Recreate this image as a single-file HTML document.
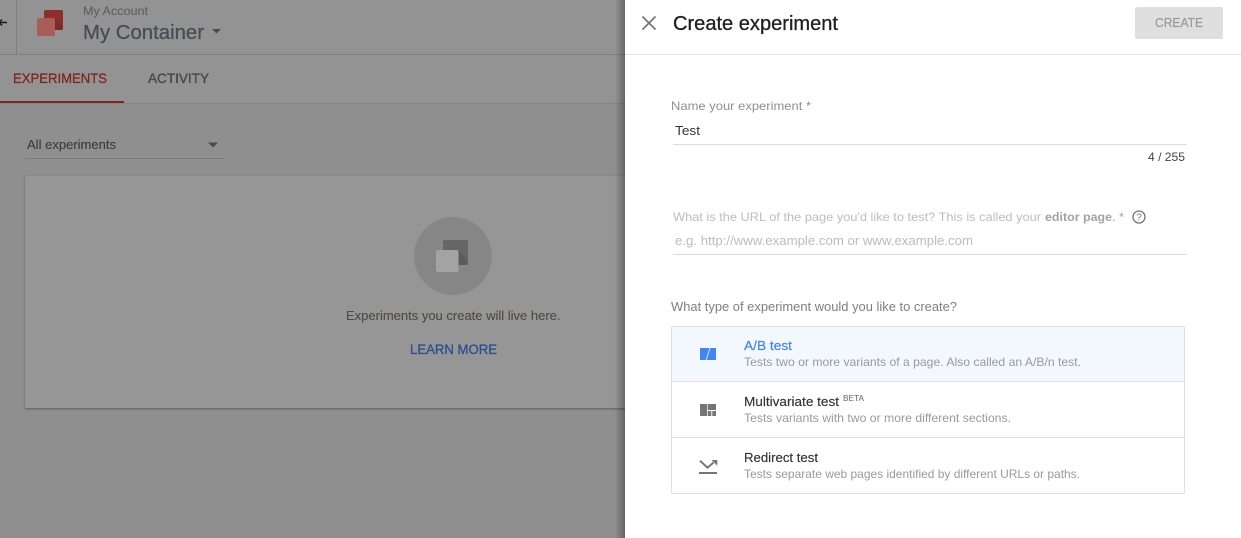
<!DOCTYPE html>
<html><head><meta charset="utf-8"><title>Create experiment</title>
<style>
html,body{margin:0;padding:0;width:1241px;height:538px;overflow:hidden;background:#8f8f8f}
svg{display:block;position:absolute;left:0;top:0}
text{font-family:"Liberation Sans",sans-serif;white-space:pre}
</style></head><body>
<svg width="1241" height="538" viewBox="0 0 1241 538" xmlns="http://www.w3.org/2000/svg">
<defs>
<linearGradient id="ps" x1="0" x2="1" y1="0" y2="0"><stop offset="0" stop-color="#000" stop-opacity="0"/><stop offset="1" stop-color="#000" stop-opacity=".3"/></linearGradient>
<filter id="cs" x="-5%" y="-5%" width="110%" height="110%"><feDropShadow dx="0" dy="1" stdDeviation="1.2" flood-color="#000" flood-opacity=".35"/></filter>
</defs>
<rect width="625" height="538" fill="#8f8f8f"/>
<rect width="625" height="54" fill="#939393"/>
<rect y="55" width="625" height="48" fill="#939393"/>
<rect y="54" width="625" height="1" fill="#7f7f7f"/>
<rect y="103" width="625" height="1" fill="#858585"/>
<rect x="16" y="0" width="1" height="54" fill="#7f7f7f"/>
<path d="M0 22.5H7M2 19.5L-1 22.500L2 25.500" fill="none" stroke="#181820" stroke-width="1.500"/>
<rect x="44" y="10" width="19" height="20" rx="2" fill="#8c2f2a"/>
<path d="M55 18L63 26V28Q63 30 61 30H55Z" fill="#7b2a26"/>
<rect x="37" y="18" width="18" height="18" rx="2" fill="#a85d5a"/>
<text x="83" y="15" font-size="12" fill="#5f5f5f" stroke="#5f5f5f" stroke-width=".1" textLength="65" lengthAdjust="spacingAndGlyphs">My Account</text>
<text x="83" y="39" font-size="20" fill="#474c55" stroke="#474c55" stroke-width=".3" textLength="121" lengthAdjust="spacingAndGlyphs">My Container</text>
<path d="M212 29H221L216.500 33.500Z" fill="#4a4a4a"/>
<text x="13" y="83" font-size="14" fill="#7e261d" stroke="#7e261d" stroke-width=".3" textLength="94" lengthAdjust="spacingAndGlyphs">EXPERIMENTS</text>
<text x="148" y="83" font-size="14" fill="#464646" stroke="#464646" stroke-width=".3" textLength="61" lengthAdjust="spacingAndGlyphs">ACTIVITY</text>
<rect x="0" y="101" width="124" height="2" fill="#7e261d"/>
<text x="27" y="149" font-size="13" fill="#3a3a3a" stroke="#3a3a3a" stroke-width=".1" textLength="89" lengthAdjust="spacingAndGlyphs">All experiments</text>
<path d="M208 142.500H218L213 147.500Z" fill="#4a4a4a"/>
<rect x="25" y="158" width="199" height="1" fill="#7a7a7a"/>
<rect x="25" y="176" width="610" height="232" fill="#969696" filter="url(#cs)"/>
<circle cx="453" cy="256" r="39" fill="#868686"/>
<rect x="443" y="240" width="25" height="25" rx="2" fill="#666666"/>
<path d="M458 250L468 260V263Q468 265 466 265H458Z" fill="#5c5c5c"/>
<rect x="436" y="250" width="22.500" height="22" rx="2" fill="#a3a3a3"/>
<text x="346" y="320" font-size="13" fill="#4d4a44" stroke="#4d4a44" stroke-width=".1" textLength="214.500" lengthAdjust="spacingAndGlyphs">Experiments you create will live here.</text>
<text x="410" y="354" font-size="14" fill="#285092" stroke="#285092" stroke-width=".3" textLength="87" lengthAdjust="spacingAndGlyphs">LEARN MORE</text>
<rect x="615" y="0" width="10" height="538" fill="url(#ps)"/>
<rect x="625" y="0" width="616" height="538" fill="#fff"/>
<path d="M642.500 16.500L655.500 29.500M655.500 16.500L642.500 29.500" stroke="#757575" stroke-width="1.700" fill="none"/>
<text x="673" y="30" font-size="20" fill="#212121" stroke="#212121" stroke-width=".3" textLength="165" lengthAdjust="spacingAndGlyphs">Create experiment</text>
<rect x="625" y="54" width="616" height="1" fill="#e0e0e0"/>
<rect x="1135" y="7" width="88" height="32" rx="2" fill="#dfdfdf"/>
<text x="1155" y="27" font-size="12.500" fill="#9a9a9a" stroke="#9a9a9a" stroke-width=".2" textLength="48" lengthAdjust="spacingAndGlyphs">CREATE</text>
<text x="671" y="110" font-size="12" fill="#8f8f8f" textLength="140" lengthAdjust="spacingAndGlyphs">Name your experiment *</text>
<text x="675" y="135" font-size="13" fill="#333" textLength="25" lengthAdjust="spacingAndGlyphs">Test</text>
<rect x="673" y="144" width="514" height="1" fill="#dcdcdc"/>
<text x="1148" y="161" font-size="12" fill="#444" textLength="37" lengthAdjust="spacingAndGlyphs">4 / 255</text>
<text x="673" y="221" font-size="12" fill="#bdbdbd" textLength="368" lengthAdjust="spacingAndGlyphs">What is the URL of the page you'd like to test? This is called your</text>
<text x="1045" y="221" font-size="12" font-weight="bold" fill="#a3a3a3" textLength="67" lengthAdjust="spacingAndGlyphs">editor page</text>
<text x="1112" y="221" font-size="12" fill="#9e9e9e" textLength="12" lengthAdjust="spacingAndGlyphs">. *</text>
<circle cx="1139" cy="217" r="6" fill="none" stroke="#757575" stroke-width="1.300"/>
<text x="1139" y="220.700" font-size="10" fill="#757575" text-anchor="middle">?</text>
<text x="675" y="245" font-size="12.500" fill="#bcbcbc" textLength="298" lengthAdjust="spacingAndGlyphs">e.g. http://www.example.com or www.example.com</text>
<rect x="673" y="254" width="514" height="1" fill="#dcdcdc"/>
<text x="671" y="311" font-size="12.500" fill="#7f7f7f" textLength="286" lengthAdjust="spacingAndGlyphs">What type of experiment would you like to create?</text>
<rect x="671.500" y="326.500" width="513" height="167" rx="1.500" fill="#fff" stroke="#dcdfe3"/>
<rect x="672" y="327" width="512" height="54" fill="#f3f8ff"/>
<rect x="672" y="381" width="512" height="1" fill="#dcdfe3"/>
<rect x="672" y="437" width="512" height="1" fill="#e0e0e0"/>
<rect x="700" y="348" width="16" height="12" fill="#4285f4"/>
<path d="M706.200 360L710 348" stroke="#e4edfd" stroke-width=".9"/>
<path d="M700 404H707V416H700ZM707.700 404H716V410H707.700ZM707.700 411H711.300V416H707.700ZM712.300 411H716V416H712.300Z" fill="#757575"/>
<path d="M700 460.700L707.500 467.700L713.500 462.500" fill="none" stroke="#757575" stroke-width="2"/>
<path d="M711.500 460H717.300V465.800Z" fill="#757575"/>
<rect x="699" y="472" width="18" height="2" fill="#757575"/>
<text x="744" y="350" font-size="12.500" fill="#4285f4" stroke="#4285f4" stroke-width=".2" textLength="48" lengthAdjust="spacingAndGlyphs">A/B test</text>
<text x="744" y="366" font-size="12" fill="#9a9a9a" textLength="337" lengthAdjust="spacingAndGlyphs">Tests two or more variants of a page. Also called an A/B/n test.</text>
<text x="744" y="406" font-size="12.500" fill="#333" stroke="#333" stroke-width=".15" textLength="95" lengthAdjust="spacingAndGlyphs">Multivariate test</text>
<text x="843" y="401" font-size="8" fill="#666" textLength="21" lengthAdjust="spacingAndGlyphs">BETA</text>
<text x="744" y="422" font-size="12" fill="#9a9a9a" textLength="267" lengthAdjust="spacingAndGlyphs">Tests variants with two or more different sections.</text>
<text x="744" y="462" font-size="12.500" fill="#333" stroke="#333" stroke-width=".15" textLength="74" lengthAdjust="spacingAndGlyphs">Redirect test</text>
<text x="744" y="478" font-size="12" fill="#9a9a9a" textLength="336" lengthAdjust="spacingAndGlyphs">Tests separate web pages identified by different URLs or paths.</text>
</svg>
</body></html>
